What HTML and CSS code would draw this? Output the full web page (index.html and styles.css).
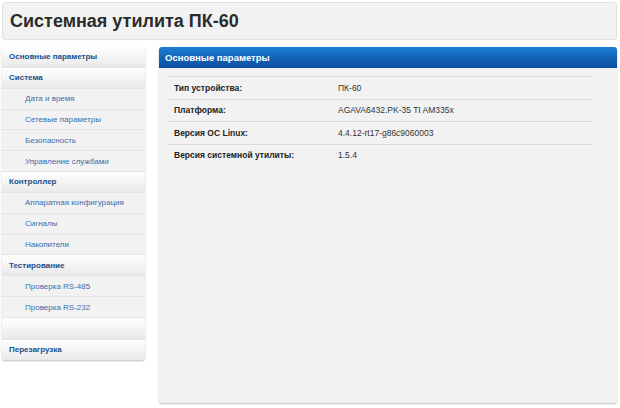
FILE: index.html
```html
<!DOCTYPE html>
<html lang="ru">
<head>
    <meta charset="UTF-8">
    <title>Системная утилита ПК-60</title>
    <link rel="stylesheet" href="styles.css">
</head>
<body>
    <div class="header">
        <h1>Системная утилита ПК-60</h1>
    </div>

    <div class="layout">
        <!-- Меню -->
        <ul class="menu">
            <li class="menu-group"><a href="#">Основные параметры</a></li>
            <li class="menu-group"><a href="#">Система</a></li>
            <li class="menu-item"><a href="#">Дата и время</a></li>
            <li class="menu-item"><a href="#">Сетевые параметры</a></li>
            <li class="menu-item"><a href="#">Безопасность</a></li>
            <li class="menu-item"><a href="#">Управление службами</a></li>
            <li class="menu-group"><a href="#">Контроллер</a></li>
            <li class="menu-item"><a href="#">Аппаратная конфигурация</a></li>
            <li class="menu-item"><a href="#">Сигналы</a></li>
            <li class="menu-item"><a href="#">Накопители</a></li>
            <li class="menu-group"><a href="#">Тестирование</a></li>
            <li class="menu-item"><a href="#">Проверка RS-485</a></li>
            <li class="menu-item"><a href="#">Проверка RS-232</a></li>
            <li class="menu-group menu-blank"></li>
            <li class="menu-group"><a href="#">Перезагрузка</a></li>
        </ul>

        <!-- Основные параметры -->
        <div class="panel">
            <div class="panel-title">Основные параметры</div>
            <table class="info">
                <tr>
                    <th>Тип устройства:</th>
                    <td>ПК-60</td>
                </tr>
                <tr>
                    <th>Платформа:</th>
                    <td>AGAVA6432.PK-35 TI AM335x</td>
                </tr>
                <tr>
                    <th>Версия ОС Linux:</th>
                    <td>4.4.12-rt17-g86c9060003</td>
                </tr>
                <tr>
                    <th>Версия системной утилиты:</th>
                    <td>1.5.4</td>
                </tr>
            </table>
        </div>
    </div>
</body>
</html>
```

FILE: styles.css
```css
body {
    margin: 0;
    padding: 2px 3px 4px 2px;
    font-family: "Liberation Sans", Arial, sans-serif;
    font-size: 8.5px;
    background-color: white;
    color: #222;
}

.header {
    height: 36px;
    background-color: #f2f2f2;
    border: 1px solid #e2e2e2;
    border-radius: 3px;
    display: flex;
    align-items: center;
    padding-left: 7px;
}

h1 {
    margin: 0;
    font-size: 18px;
    font-weight: bold;
    color: #2b2b2b;
}

.layout {
    display: flex;
    align-items: flex-start;
    gap: 14px;
    margin-top: 7px;
}

.menu {
    list-style: none;
    margin: 0;
    padding: 0;
    width: 143px;
    flex-shrink: 0;
    font-size: 8px;
    border-radius: 3px;
    background-color: #f2f2f2;
    box-shadow: 0 1px 2px rgba(0, 0, 0, 0.25);
    overflow: hidden;
}

.menu li {
    height: 19.85px;
    display: flex;
    align-items: center;
    border-bottom: 1px solid #e4e4e4;
}

.menu li:last-child {
    border-bottom: none;
}

.menu a {
    text-decoration: none;
}

.menu-group {
    background: linear-gradient(to bottom, #ffffff, #e9e9e9);
    padding-left: 7px;
}

.menu-group a {
    font-weight: bold;
    color: #174f8c;
}

.menu-blank {
    height: 21px !important;
}

.menu-item {
    padding-left: 23px;
}

.menu-item a {
    color: #3a6db0;
}

.panel {
    flex: 1;
    height: 356px;
    background-color: #f2f2f2;
    border-radius: 3px;
    box-shadow: 0 1px 2px rgba(0, 0, 0, 0.25);
}

.panel-title {
    height: 21px;
    display: flex;
    align-items: center;
    padding-left: 6px;
    background: linear-gradient(to bottom, #1c7fd4, #0a4c9e);
    color: white;
    font-size: 9.5px;
    font-weight: bold;
    border-radius: 3px 3px 0 0;
}

.info {
    margin: 8px 24px 0 9px;
    width: calc(100% - 33px);
    border-collapse: collapse;
    border-top: 1px solid #dcdcdc;
}

.info th,
.info td {
    height: 21.5px;
    padding: 0 0 0 6px;
    text-align: left;
    border-bottom: 1px solid #dcdcdc;
}

.info th {
    width: 158px;
    font-weight: bold;
    color: #222;
}

.info td {
    color: #333;
}

.info tr:last-child th,
.info tr:last-child td {
    border-bottom: none;
}
```
